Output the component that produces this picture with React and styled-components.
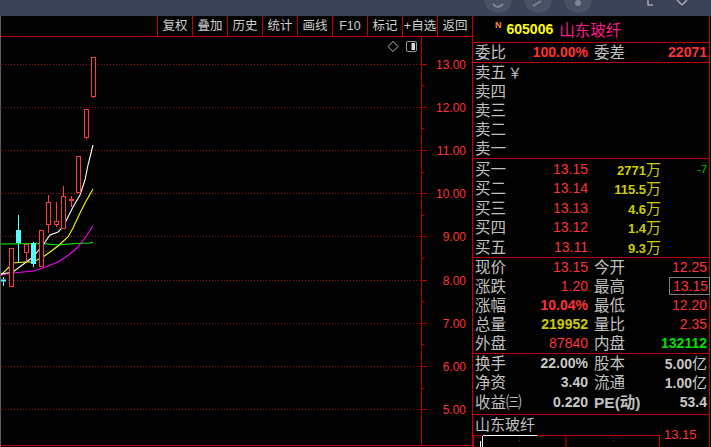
import styled, { createGlobalStyle } from "styled-components";

const GlobalStyle = createGlobalStyle`
  html, body {
    margin: 0;
    padding: 0;
    background: #000;
  }
  body {
    font-family: "Liberation Sans", "Noto Sans CJK SC", sans-serif;
  }
`;

const RED_LINE = "#c00000";
const GRAY = "#c0c0c0";
const RED = "#ff3333";
const YELLOW = "#cccc00";
const GREEN = "#00e000";

const Screen = styled.div`
  width: 711px;
  height: 447px;
  background: #000;
  display: flex;
  flex-direction: column;
  overflow: hidden;
`;

const TitleBar = styled.div`
  height: 16px;
  flex: none;
  background: #3c4356;
  display: flex;
  padding-left: 484px;
`;

const Body = styled.div`
  flex: 1;
  display: flex;
  min-height: 0;
`;

const ChartPane = styled.div`
  width: 472px;
  box-sizing: border-box;
  border-left: 1px solid #5e5e5e;
  display: flex;
  flex-direction: column;
`;

const Toolbar = styled.div`
  height: 20px;
  flex: none;
  border-bottom: 1px solid ${RED_LINE};
  display: flex;
  justify-content: flex-end;
`;

const ToolButton = styled.div`
  width: 35px;
  box-sizing: border-box;
  border-left: 1px solid ${RED_LINE};
  color: #d0d0d0;
  font-size: 12.5px;
  line-height: 20px;
  text-align: center;
  white-space: nowrap;
`;

const ChartSvg = styled.svg`
  display: block;
  flex: 1;
`;

const Quote = styled.div`
  width: 238px;
  box-sizing: border-box;
  border-left: 1px solid ${RED_LINE};
  border-right: 1px solid ${RED_LINE};
  display: flex;
  flex-direction: column;
`;

const Header = styled.div`
  height: 26px;
  flex: none;
  border-bottom: 1px solid ${RED_LINE};
  display: flex;
  align-items: center;
  padding-left: 22px;
`;

const NewMark = styled.span`
  align-self: flex-start;
  margin-top: 4px;
  color: #ff8a3c;
  font-size: 9px;
  font-weight: bold;
`;

const Code = styled.span`
  margin-left: 5px;
  color: #ffff00;
  font-size: 14px;
  font-weight: bold;
`;

const Name = styled.span`
  margin-left: 6px;
  color: #ff1a8c;
  font-size: 15.5px;
`;

const Section = styled.div`
  flex: none;
  border-bottom: 1px solid ${RED_LINE};
  padding: ${(p) => p.$pad || "0"};
`;

const Row = styled.div`
  display: grid;
  grid-template-columns: ${(p) => p.$cols || "32px 81px 46px 73px"};
  height: ${(p) => p.$h || 19}px;
  line-height: ${(p) => p.$h || 19}px;
  padding: 0 2px;
  white-space: nowrap;
`;

const Label = styled.span`
  color: ${GRAY};
  font-size: 15.5px;
  font-weight: ${(p) => (p.$bold ? "bold" : "normal")};
  padding-left: ${(p) => (p.$second ? "6px" : "0")};
`;

const Value = styled.span`
  text-align: right;
  color: ${(p) => p.$c || RED};
  font-size: ${(p) => p.$size || 14}px;
  font-weight: ${(p) => (p.$bold ? "bold" : "normal")};
`;

const Unit = styled.span`
  font-size: 15px;
  font-weight: normal;
`;

const Yen = styled.span`
  margin-left: 2px;
  font-size: 14px;
  color: ${GRAY};
`;

const Boxed = styled.span`
  border: 1px solid #808080;
  padding: 0 1px 0 3px;
  margin-right: -3px;
`;

const MiniTitle = styled.div`
  height: 17px;
  line-height: 20px;
  padding-left: 2px;
  color: ${GRAY};
  font-size: 15px;
`;

const MiniRow = styled.div`
  display: flex;
  height: 15px;
`;

const MiniPrice = styled.div`
  margin: -4px 0 0 4px;
  color: ${RED};
  font-size: 13px;
  line-height: 13px;
`;

const tools = ["复权", "叠加", "历史", "统计", "画线", "F10", "标记", "+自选", "返回"];

// price grid: 13.00 sits at y 63.5, 43.2px per yuan
const priceY = (v) => 63.5 + (13 - v) * 43.2;
const levels = [13, 12, 11, 10, 9, 8, 7, 6, 5];

// pixel candles: x centre, body top/bottom, high/low
const candles = [
  { x: 3.5, top: 279.5, bottom: 281.5, high: 277, low: 286, up: false },
  { x: 11.5, top: 248.5, bottom: 286.5, high: 248, low: 287, up: true },
  { x: 18.5, top: 230, bottom: 243, high: 215, low: 263, up: false },
  { x: 26.5, top: 244.5, bottom: 252.5, high: 244, low: 262, up: true },
  { x: 33.5, top: 243, bottom: 264, high: 242, low: 267, up: false },
  { x: 41.5, top: 230.5, bottom: 266.5, high: 230, low: 267, up: true },
  { x: 48.5, top: 202.5, bottom: 224.5, high: 195, low: 233, up: true },
  { x: 56.5, top: 221.5, bottom: 224.5, high: 202, low: 227, up: true },
  { x: 63.5, top: 196.5, bottom: 228.5, high: 186, low: 229, up: true },
  { x: 71.5, top: 199.5, bottom: 200.5, high: 196, low: 207, up: true },
  { x: 78.5, top: 156.5, bottom: 192.5, high: 156, low: 193, up: true },
  { x: 86.5, top: 109.5, bottom: 137.5, high: 109, low: 139, up: true },
  { x: 93.5, top: 57.5, bottom: 96.5, high: 57, low: 98, up: true },
];

const averages = [
  {
    color: "#00ff00",
    points: "1,244 43,243.5 58,245 75,243.5 90,243 93,242",
  },
  {
    color: "#ff00ff",
    points: "1,275 13,273 33,271 43,268 58,262 70,254 77,248 85,238 93,226",
  },
  {
    color: "#ffff00",
    points: "1,275 13,263 25,262 33,262 43,257 50,252 58,246 68,237 73,228 80,213 85,203 93,189",
  },
  {
    color: "#ffffff",
    points: "1,274 13,272 25,263 33,257 43,245 50,235 58,232 63,227 68,217 73,207 80,195 85,180 88,165 93,145",
  },
];

const buys = [
  ["买一", "13.15", "2771", "-7"],
  ["买二", "13.14", "115.5", ""],
  ["买三", "13.13", "4.6", ""],
  ["买四", "13.12", "1.4", ""],
  ["买五", "13.11", "9.3", ""],
];

function GhostIcons() {
  return (
    <svg width="220" height="16" viewBox="484 0 220 16">
      <circle cx="498" cy="-1" r="14" fill="#4a5165" />
      <circle cx="538" cy="-1" r="14" fill="#4a5165" />
      <circle cx="578" cy="-1" r="14" fill="#4a5165" />
      <path d="M493 4 q5 6 10 0" stroke="#7d8496" strokeWidth="2" fill="none" />
      <path d="M533 6 l8 -5" stroke="#7d8496" strokeWidth="2" fill="none" />
      <circle cx="578" cy="3" r="3" fill="#7d8496" />
      <path d="M648 0 v5 h5" stroke="#a3a8b4" strokeWidth="1.5" fill="none" />
      <path d="M677 0 l5 5 M687 0 l-5 5" stroke="#a3a8b4" strokeWidth="1.5" fill="none" />
    </svg>
  );
}

function Chart() {
  return (
    <ChartSvg width="471" height="410" viewBox="1 37 471 410">
      {levels.map((v) => {
        const y = Math.round(priceY(v)) + 0.5;
        return (
          <g key={v}>
            <line x1="2" x2="420" y1={y} y2={y} stroke="#a01010" strokeDasharray="1 2" />
            <line x1="421" x2="427" y1={y} y2={y} stroke={RED_LINE} />
            <text x="466" y={y + 4.5} fill={RED} fontSize="12" textAnchor="end" fontFamily="Liberation Sans">
              {v.toFixed(2)}
            </text>
          </g>
        );
      })}
      {levels.slice(0, -1).map((v) => {
        const y = Math.round(priceY(v - 0.5)) + 0.5;
        return <line key={v} x1="421" x2="424" y1={y} y2={y} stroke={RED_LINE} />;
      })}
      <line x1="421.5" x2="421.5" y1="37" y2="446" stroke={RED_LINE} />
      <line x1="1" x2="472" y1="445.5" y2="445.5" stroke={RED_LINE} />

      <path d="M393 41.5 l5 5 l-5 5 l-5 -5 z" stroke="#bdbdbd" fill="none" />
      <rect x="406.5" y="41.5" width="10" height="10" rx="1.5" stroke="#9a9a9a" fill="none" />
      <rect x="411.5" y="43" width="3.5" height="7" fill="#d8d8d8" />

      {averages.map((a) => (
        <polyline key={a.color} points={a.points} stroke={a.color} fill="none" strokeWidth="1.1" />
      ))}

      {candles.map((c) => {
        const color = c.up ? "#ff3c3c" : "#55ffff";
        return (
          <g key={c.x}>
            <line x1={c.x} x2={c.x} y1={c.high} y2={c.top} stroke={color} />
            <line x1={c.x} x2={c.x} y1={c.bottom} y2={c.low} stroke={color} />
            {c.up ? (
              <rect x={c.x - 2} y={c.top} width="4" height={c.bottom - c.top} stroke={color} fill="#000" />
            ) : (
              <rect x={c.x - 2.5} y={c.top} width="5" height={c.bottom - c.top} fill={color} />
            )}
          </g>
        );
      })}
    </ChartSvg>
  );
}

function MiniChart() {
  return (
    <svg width="187" height="15" viewBox="0 0 187 15">
      <line x1="0" x2="187" y1="3.5" y2="3.5" stroke={RED_LINE} />
      <line x1="0.5" x2="0.5" y1="3.5" y2="15" stroke={RED_LINE} />
      <line x1="93" x2="93" y1="3.5" y2="15" stroke={RED_LINE} />
      <line x1="186.5" x2="186.5" y1="3.5" y2="15" stroke={RED_LINE} />
      <line x1="46.5" x2="46.5" y1="5" y2="11" stroke={RED_LINE} strokeDasharray="1 2" />
      <line x1="140.5" x2="140.5" y1="5" y2="11" stroke={RED_LINE} strokeDasharray="1 2" />
      <line x1="10" x2="64" y1="3.5" y2="3.5" stroke="#fff" />
      <line x1="9.5" x2="9.5" y1="4" y2="15" stroke="#fff" />
      <line x1="7.5" x2="7.5" y1="9" y2="15" stroke="#fff" />
    </svg>
  );
}

export default function App() {
  return (
    <Screen>
      <GlobalStyle />
      <TitleBar>
        <GhostIcons />
      </TitleBar>
      <Body>
        <ChartPane>
          <Toolbar>
            {tools.map((t) => (
              <ToolButton key={t}>{t}</ToolButton>
            ))}
          </Toolbar>
          <Chart />
        </ChartPane>

        <Quote>
          <Header>
            <NewMark>N</NewMark>
            <Code>605006</Code>
            <Name>山东玻纤</Name>
          </Header>

          <Section>
            <Row>
              <Label>委比</Label>
              <Value $bold>100.00%</Value>
              <Label $second>委差</Label>
              <Value $bold>22071</Value>
            </Row>
          </Section>

          <Section>
            {["卖五", "卖四", "卖三", "卖二", "卖一"].map((s, i) => (
              <Row key={s} $cols="1fr">
                <Label>
                  {s}
                  {i === 0 && <Yen>￥</Yen>}
                </Label>
              </Row>
            ))}
          </Section>

          <Section $pad="1px 0 0">
            {buys.map(([label, price, vol, diff]) => (
              <Row key={label} $h={19.4} $cols="32px 81px 73px 46px">
                <Label>{label}</Label>
                <Value>{price}</Value>
                <Value $c={YELLOW} $size={13} $bold>
                  {vol}
                  <Unit>万</Unit>
                </Value>
                <Value $c="#00c000" $size={11}>
                  {diff}
                </Value>
              </Row>
            ))}
          </Section>

          <Section>
            <Row>
              <Label>现价</Label>
              <Value>13.15</Value>
              <Label $second>今开</Label>
              <Value>12.25</Value>
            </Row>
            <Row>
              <Label>涨跌</Label>
              <Value>1.20</Value>
              <Label $second>最高</Label>
              <Value>
                <Boxed>13.15</Boxed>
              </Value>
            </Row>
            <Row>
              <Label>涨幅</Label>
              <Value $bold>10.04%</Value>
              <Label $second>最低</Label>
              <Value>12.20</Value>
            </Row>
            <Row>
              <Label>总量</Label>
              <Value $c={YELLOW} $bold>
                219952
              </Value>
              <Label $second>量比</Label>
              <Value>2.35</Value>
            </Row>
            <Row>
              <Label>外盘</Label>
              <Value>87840</Value>
              <Label $second>内盘</Label>
              <Value $c={GREEN} $bold>
                132112
              </Value>
            </Row>
          </Section>

          <Section $pad="0 0 2px">
            <Row $h={19.3}>
              <Label>换手</Label>
              <Value $c="#c8c8c8" $bold>
                22.00%
              </Value>
              <Label $second>股本</Label>
              <Value $c="#c8c8c8" $bold>
                5.00<Unit>亿</Unit>
              </Value>
            </Row>
            <Row $h={19.3}>
              <Label>净资</Label>
              <Value $c="#c8c8c8" $bold>
                3.40
              </Value>
              <Label $second>流通</Label>
              <Value $c="#c8c8c8" $bold>
                1.00<Unit>亿</Unit>
              </Value>
            </Row>
            <Row $h={19.3}>
              <Label>收益㈢</Label>
              <Value $c="#c8c8c8" $bold>
                0.220
              </Value>
              <Label $second $bold>
                PE(动)
              </Label>
              <Value $c="#c8c8c8" $bold>
                53.4
              </Value>
            </Row>
          </Section>

          <MiniTitle>山东玻纤</MiniTitle>
          <MiniRow>
            <MiniChart />
            <MiniPrice>13.15</MiniPrice>
          </MiniRow>
        </Quote>
      </Body>
    </Screen>
  );
}
